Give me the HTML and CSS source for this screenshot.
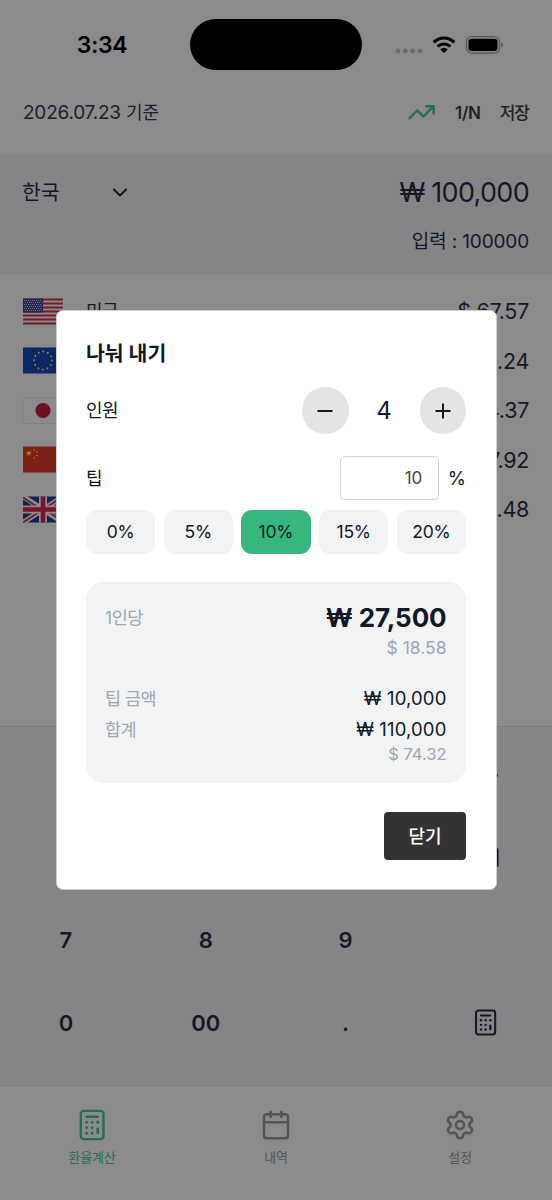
FILE: index.html
```html
<!DOCTYPE html>
<html lang="ko">
<head>
<meta charset="utf-8">
<title>환율계산</title>
<link rel="stylesheet" href="styles.css">
</head>
<body>
<svg class="defs" width="0" height="0">
  <symbol id="calc" viewBox="0 0 24 24">
    <rect x="3.6" y="1.4" width="17" height="21.2" rx="2.2" fill="none" stroke="currentColor" stroke-width="1.8"/>
    <path d="M8 5.8h8.2" stroke="currentColor" stroke-width="1.9" stroke-linecap="round"/>
    <path d="M16.3 14.8v3.2" stroke="currentColor" stroke-width="2" stroke-linecap="round"/>
    <g fill="currentColor"><circle cx="8" cy="10" r="1.1"/><circle cx="12.1" cy="10" r="1.1"/><circle cx="16.3" cy="10" r="1.1"/><circle cx="8" cy="14.1" r="1.1"/><circle cx="12.1" cy="14.1" r="1.1"/><circle cx="8" cy="18.2" r="1.1"/><circle cx="12.1" cy="18.2" r="1.1"/></g>
  </symbol>
  <symbol id="star" viewBox="-10 -10 20 20"><path fill="currentColor" d="M0-10 2.3-3.2 9.5-3.1 3.8 1.2 5.9 8.1 0 4-5.9 8.1-3.8 1.2-9.5-3.1-2.3-3.2z"/></symbol>
</svg>
<div class="screen">
  <div class="status">
    <div class="time">3:34</div>
    <div class="island"></div>
    <div class="signals">
      <svg width="108" height="20" viewBox="0 0 108 20">
        <g fill="#6d6d6d"><circle cx="3" cy="16" r="2.4"/><circle cx="10.3" cy="16" r="2.4"/><circle cx="17.6" cy="16" r="2.4"/><circle cx="25" cy="16" r="2.4"/></g>
        <g fill="none" stroke="#000" stroke-width="3.1"><path d="M38.7 7.3a14.5 14.5 0 0 1 20.6 0"/><path d="M42.7 11.5a9 9 0 0 1 12.6 0"/></g>
        <path d="M45.3 14.4a5.2 5.2 0 0 1 7.4 0L49 18z"/>
        <rect x="71.5" y="1.7" width="33" height="16.3" rx="5" fill="none" stroke="#5a5a5a" stroke-width="1.3"/>
        <rect x="73.5" y="3.7" width="29" height="12.3" rx="3.2"/>
        <path d="M106 7.2q2 .8 2 2.7t-2 2.7z" fill="#5a5a5a"/>
      </svg>
    </div>
  </div>
  <div class="header">
    <div class="date">2026.07.23 <span class="ko">기준</span></div>
    <div class="actions">
      <svg class="trend" viewBox="0 0 24 24"><path d="M22 6l-8.5 8.5-5-5L2 16M16 6h6v6"/></svg>
      <span class="split">1/N</span><span class="save">저장</span>
    </div>
  </div>
  <div class="base">
    <div class="base-row">
      <div class="country"><span>한국</span><svg viewBox="0 0 24 24"><path d="M6 8.5l6 6 6-6"/></svg></div>
      <div class="base-amount">₩ 100,000</div>
    </div>
    <div class="typed"><span class="ko">입력</span> : 100000</div>
  </div>
  <div class="rates">
    <div class="rate">
      <svg class="flag" viewBox="0 0 40 26"><path fill="#8b8b8b" d="M0 0h40v26H0z"/><path stroke="#78192a" stroke-width="2" d="M0 1h40M0 5h40M0 9h40M0 13h40M0 17h40M0 21h40M0 25h40"/><path fill="#25244a" d="M0 0h20v14H0z"/><path stroke="#77778c" stroke-width="1" stroke-dasharray="1 1" d="M1 2h18M2 4h17M1 6h18M2 8h17M1 10h18M2 12h17"/></svg>
      <span class="name">미국</span><span class="value">$ 67.57</span>
    </div>
    <div class="rate">
      <svg class="flag" viewBox="0 0 40 26"><path fill="#0b2767" d="M0 0h40v26H0z"/><circle cx="20" cy="13" r="9" fill="none" stroke="#988522" stroke-width="2" stroke-linecap="round" stroke-dasharray=".01 4.702"/></svg>
      <span class="value">9.24</span>
    </div>
    <div class="rate">
      <svg class="flag" viewBox="0 0 40 26"><path fill="#8b8b8b" stroke="#808080" d="M0 0h40v26H0z"/><circle cx="20" cy="13" r="7.6" fill="#701026"/></svg>
      <span class="value">4.37</span>
    </div>
    <div class="rate">
      <svg class="flag" viewBox="0 0 40 26"><path fill="#7d2018" d="M0 0h40v26H0z"/><g color="#a38a10"><use href="#star" x="2.5" y="3.5" width="6.5" height="6.5"/><use href="#star" x="10" y="2" width="2.6" height="2.6"/><use href="#star" x="12.7" y="4.2" width="2.6" height="2.6"/><use href="#star" x="12.7" y="7.6" width="2.6" height="2.6"/><use href="#star" x="10" y="10" width="2.6" height="2.6"/></g></svg>
      <span class="value">7.92</span>
    </div>
    <div class="rate">
      <svg class="flag" viewBox="0 0 40 26"><path fill="#16214f" d="M0 0h40v26H0z"/><path stroke="#8b8b8b" stroke-width="5.2" d="M0 0l40 26M40 0L0 26"/><path stroke="#79142a" stroke-width="1.8" d="M0 1l20 13M40 0L20 13M0 26l20-13M40 25L20 12"/><path stroke="#8b8b8b" stroke-width="8" d="M20 0v26M0 13h40"/><path stroke="#79142a" stroke-width="4.6" d="M20 0v26M0 13h40"/></svg>
      <span class="value">.48</span>
    </div>
  </div>
  <div class="keypad">
    <span></span><span></span><span></span><span><svg class="key-icon" viewBox="0 0 24 24"><path fill="none" stroke="currentColor" stroke-width="4" stroke-linecap="round" d="M2 12h19"/></svg></span>
    <span></span><span></span><span></span><span><svg class="key-icon" viewBox="0 0 24 24"><path fill="none" stroke="currentColor" stroke-width="2.4" stroke-linejoin="round" d="M9 5h13.4v14H9l-7-7z"/></svg></span>
    <span>7</span><span>8</span><span>9</span><span></span>
    <span>0</span><span>00</span><span>.</span><span><svg class="key-icon"><use href="#calc"/></svg></span>
  </div>
  <div class="tabs">
    <div class="tab active"><svg><use href="#calc"/></svg><span>환율계산</span></div>
    <div class="tab"><svg viewBox="0 0 24 24" class="line"><path d="M8 2v4M16 2v4M3 10h18"/><rect x="3" y="4" width="18" height="18" rx="2"/></svg><span>내역</span></div>
    <div class="tab"><svg viewBox="0 0 24 24" class="line"><path d="M9.671 4.136a2.34 2.34 0 0 1 4.659 0 2.34 2.34 0 0 0 3.319 1.915 2.34 2.34 0 0 1 2.33 4.033 2.34 2.34 0 0 0 0 3.831 2.34 2.34 0 0 1-2.33 4.033 2.34 2.34 0 0 0-3.319 1.915 2.34 2.34 0 0 1-4.659 0 2.34 2.34 0 0 0-3.32-1.915 2.34 2.34 0 0 1-2.33-4.033 2.34 2.34 0 0 0 0-3.831A2.34 2.34 0 0 1 6.35 6.051a2.34 2.34 0 0 0 3.319-1.915"/><circle cx="12" cy="12" r="3"/></svg><span>설정</span></div>
  </div>

  <div class="dialog">
    <div class="title">나눠 내기</div>
    <div class="people">
      <span class="label">인원</span>
      <div class="stepper">
        <div class="round"><svg viewBox="0 0 16 16"><path d="M.5 8h15"/></svg></div>
        <span class="count">4</span>
        <div class="round"><svg viewBox="0 0 16 16"><path d="M.5 8h15M8 .5v15"/></svg></div>
      </div>
    </div>
    <div class="tip">
      <span class="label">팁</span>
      <div class="tip-entry"><div class="input">10</div><span class="pct">%</span></div>
    </div>
    <div class="chips"><span>0%</span><span>5%</span><span class="on">10%</span><span>15%</span><span>20%</span></div>
    <div class="summary">
      <div class="line-item each"><span class="muted">1<span class="ko">인당</span></span><b>₩ 27,500</b></div>
      <div class="usd first">$ 18.58</div>
      <div class="line-item"><span class="muted ko">팁 금액</span><span class="won">₩ 10,000</span></div>
      <div class="line-item"><span class="muted ko">합계</span><span class="won">₩ 110,000</span></div>
      <div class="usd last">$ 74.32</div>
    </div>
    <div class="close">닫기</div>
  </div>
</div>
</body>
</html>
```
FILE: styles.css
```css
* { box-sizing: border-box; }
body { margin: 0; background: #8b8b8b; font-family: Inter, "Noto Sans CJK KR", sans-serif; color: #151927; }
svg { display: block; flex: none; }
.defs { position: absolute; }
.screen { position: relative; width: 552px; height: 1200px; overflow: hidden; background: #8b8b8b; white-space: nowrap; display: flex; flex-direction: column; }

.status { height: 70px; flex: none; display: grid; grid-template-columns: 190px 172px 190px; padding-top: 19px; }
.time { color: #000; font-size: 23px; font-weight: 600; line-height: 52px; text-align: center; padding-left: 14px; letter-spacing: -0.4px; }
.island { height: 51px; border-radius: 26px; background: #000; }
.signals { padding: 16px 0 0 33px; }

.header { height: 84px; flex: none; display: flex; justify-content: space-between; align-items: center; padding: 2px 23px 0; }
.date { font-size: 19px; line-height: 26px; letter-spacing: -0.22px; color: #1b1e2b; }
.date .ko { font-size: 18px; letter-spacing: -0.1px; }
.actions { display: flex; align-items: center; color: #222; font-size: 17px; font-weight: 600; line-height: 26px; }
.trend { width: 29px; height: 29px; fill: none; stroke: #257052; stroke-width: 2; stroke-linecap: round; stroke-linejoin: miter; margin-right: 19px; }
.split { margin-right: 19px; letter-spacing: -0.3px; }
.save { font-weight: 500; letter-spacing: -1px; }

.base { height: 121px; flex: none; background: #858587; padding: 20px 23px 0; }
.base-row { display: flex; justify-content: space-between; align-items: center; height: 36px; }
.country { display: flex; align-items: center; width: 109px; justify-content: space-between; font-size: 20.5px; line-height: 28px; padding-top: 1px; margin-left: -1px; }
.country svg { width: 24px; height: 24px; margin-right: -1px; fill: none; stroke: #10141c; stroke-width: 2; stroke-linecap: round; stroke-linejoin: round; }
.base-amount { font-size: 27px; letter-spacing: -0.7px; }
.typed { text-align: right; font-size: 19px; line-height: 26px; margin-top: 19px; letter-spacing: -0.15px; }

.rates { height: 451px; flex: none; padding: 11.4px 23px 0; }
.rate { display: flex; align-items: center; height: 49.5px; }
.flag { width: 40px; height: 27px; }
.name { font-size: 18px; margin-left: 23px; letter-spacing: -0.5px; line-height: 24px; padding-top: 2px; }
.value { margin-left: auto; font-size: 21.5px; letter-spacing: -0.3px; }

.keypad { height: 359px; flex: none; background: #858587; border-top: 1.5px solid #7c7c7e; display: grid; grid-template-columns: repeat(4, 139.8px); grid-template-rows: repeat(4, 82.5px); padding: 7px 0 0 0; margin-left: -4px; font-size: 22px; font-weight: 600; }
.keypad > span { display: flex; align-items: center; justify-content: center; }
.key-icon { width: 27px; height: 27px; }

.tabs { flex: 1; border-top: 1px solid #7c7c7e; display: grid; grid-template-columns: repeat(3, 1fr); padding-top: 23px; }
.tab { display: flex; flex-direction: column; align-items: center; color: #555; font-size: 13px; line-height: 20px; gap: 6px; }
.tab svg { width: 32px; height: 32px; }
.tab span { letter-spacing: -0.1px; }
.tab.active { color: #257052; }
.line { fill: none; stroke: currentColor; stroke-width: 1.9; stroke-linecap: round; stroke-linejoin: round; }

.dialog { position: absolute; left: 55.5px; top: 310px; width: 441px; height: 580px; background: #fff; border: 1px solid #cfcfcf; border-radius: 7px; padding: 29px 29.5px 0 29.5px; color: #111827; }
.title { font-size: 20.5px; font-weight: 700; line-height: 28px; letter-spacing: 0; }
.label { font-size: 18px; letter-spacing: -0.5px; line-height: 26px; padding-top: 1px; }
.people { display: flex; justify-content: space-between; align-items: center; height: 47px; margin-top: 19px; }
.stepper { display: flex; align-items: center; }
.round { width: 46.5px; height: 46.5px; border-radius: 50%; background: #e4e4e4; display: flex; align-items: center; justify-content: center; }
.round svg { width: 16px; height: 16px; fill: none; stroke: #111827; stroke-width: 2; }
.count { width: 71px; text-align: center; font-size: 24px; }
.tip { display: flex; justify-content: space-between; align-items: center; height: 44px; margin-top: 22px; }
.tip-entry { display: flex; align-items: center; }
.input { width: 99px; height: 44px; border: 1.5px solid #d2d2d2; border-radius: 5px; text-align: right; padding-right: 16px; font-size: 17px; line-height: 42px; color: #444; }
.pct { font-size: 18.5px; margin-left: 8.5px; }
.chips { display: grid; grid-template-columns: repeat(5, 1fr); gap: 8.5px; margin-top: 10px; }
.chips span { height: 43.5px; line-height: 44px; border-radius: 11px; background: #f2f3f5; text-align: center; font-size: 17.5px; letter-spacing: -0.2px; }
.chips .on { background: #35b77e; }
.summary { height: 201.5px; margin-top: 28px; background: #f2f3f5; border-radius: 18px; padding: 18px 19.5px 0 19px; }
.line-item { display: flex; justify-content: space-between; align-items: center; height: 31.5px; font-size: 18px; }
.muted { color: #a0a6b2; font-size: 17.5px; line-height: 24px; letter-spacing: -0.5px; }
.muted.ko { padding-top: 2px; }
.summary b { font-size: 26px; letter-spacing: -0.1px; line-height: 36px; }
.each { height: 36px; }
.won { font-size: 18.5px; letter-spacing: 0.15px; }
.usd { text-align: right; color: #a0a6b2; }
.usd.first { font-size: 17.5px; line-height: 24px; margin-bottom: 22.5px; }
.usd.last { font-size: 16.5px; line-height: 18px; }
.close { width: 82px; height: 48px; margin: 29px 0 0 auto; background: #333; border-radius: 4px; color: #fff; font-size: 18px; font-weight: 500; line-height: 49px; text-align: center; }
```
